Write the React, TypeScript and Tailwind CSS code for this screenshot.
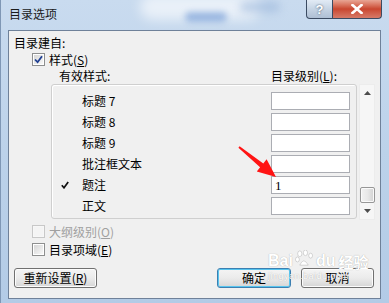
import { clsx } from "clsx";

const rows = [
  { name: "标题 7", level: "" },
  { name: "标题 8", level: "" },
  { name: "标题 9", level: "" },
  { name: "批注框文本", level: "" },
  { name: "题注", level: "1", used: true },
  { name: "正文", level: "" },
];

function CheckBox({ checked, disabled }: { checked?: boolean; disabled?: boolean }) {
  return (
    <span
      className={clsx(
        "grid h-[13px] w-[13px] shrink-0 place-items-center border p-[1px]",
        disabled ? "border-[#c8c8c8] bg-[#f7f7f7]" : "border-[#8e8f8f] bg-white"
      )}
    >
      <span
        className={clsx(
          "relative block h-full w-full",
          disabled ? "bg-[#f4f4f4]" : "bg-gradient-to-br from-[#d6d6d6] to-[#f8f8f8]"
        )}
      >
        {checked && (
          <svg viewBox="0 0 9 9" className="absolute inset-0 h-[9px] w-[9px]">
            <path d="M1 4.5 L3.6 7.2 L8 1.2" fill="none" stroke="#1f3f92" strokeWidth="1.8" />
          </svg>
        )}
      </span>
    </span>
  );
}

function Key({ k }: { k: string }) {
  return (
    <span>
      (<span className="underline underline-offset-1">{k}</span>)
    </span>
  );
}

function Button({ children, primary, className }: { children: React.ReactNode; primary?: boolean; className?: string }) {
  return (
    <div
      className={clsx(
        "flex h-[20px] items-center justify-center rounded-[3px] border bg-gradient-to-b from-[#f4f4f4] via-[#ebebeb] to-[#d6d6d6] text-[12px] leading-none text-black",
        primary ? "border-[#3c7fb1] shadow-[inset_0_0_0_1px_#57c4ee]" : "border-[#707070] shadow-[inset_0_0_0_1px_#fcfcfc]",
        className
      )}
    >
      {children}
    </div>
  );
}

function Arrow({ up }: { up?: boolean }) {
  return (
    <svg viewBox="0 0 7 4" className="h-[4px] w-[7px]">
      <path d={up ? "M0 4 L3.5 0 L7 4 Z" : "M0 0 L3.5 4 L7 0 Z"} fill="#4d4d4d" />
    </svg>
  );
}

export default function App() {
  return (
    <div className="relative h-[303px] w-[389px] overflow-hidden bg-gradient-to-b from-[#c9dbef] via-[#bcd2ea] to-[#b3cbe6] font-['Noto_Sans_CJK_SC','Noto_Sans',sans-serif] text-[12px] text-black">
      {/* blurred glass behind title */}
      <div className="absolute left-[140px] top-[-6px] h-[26px] w-[120px] rounded-full bg-white/60 blur-[6px]" />
      <div className="absolute left-[185px] top-[12px] h-[10px] w-[42px] rounded-full bg-[#7da3d8]/70 blur-[3px]" />
      <div className="absolute left-[240px] top-[2px] h-[10px] w-[40px] rounded-full bg-[#9ab5da]/60 blur-[4px]" />

      <div className="relative flex h-full flex-col border-l border-l-[#7f97b5] px-[7px]">
        {/* title bar */}
        <div className="flex h-[30px] items-start justify-between">
          <div className="mt-[6px] pl-[1px] text-[12px] leading-[16px] text-[#1b1b1b]">目录选项</div>
          <div className="flex">
            <div className="grid h-[19px] w-[27px] place-items-center rounded-bl-[4px] border border-t-0 border-[#3b4b62] bg-gradient-to-b from-[#e2ebf5] via-[#c6d4e4] to-[#aebfd4] font-['Liberation_Sans',sans-serif] text-[13px] font-bold leading-none text-white [text-shadow:0_0_2px_#34495e]">
              ?
            </div>
            <div className="grid h-[19px] w-[49px] place-items-center rounded-br-[4px] border border-l-0 border-t-0 border-[#3b4b62] bg-gradient-to-b from-[#e8a594] via-[#c9462f] to-[#d67a68]">
              <svg viewBox="0 0 12 10" className="h-[10px] w-[12px]">
                <path d="M1.5 1 L10.5 9 M10.5 1 L1.5 9" stroke="#fff" strokeWidth="2.6" strokeLinecap="square" />
              </svg>
            </div>
          </div>
        </div>

        {/* client area */}
        <div className="flex h-[269px] w-[373px] flex-col border border-[#6f8199] bg-[#f0f0f0] pb-[10px]">
          <div className="ml-[5px] mt-[4px] h-[16px] leading-[16px]">目录建自:</div>

          <div className="ml-[23px] mt-[2px] flex h-[13px] items-center gap-[4px] leading-[13px]">
            <CheckBox checked />
            <span>
              样式<Key k="S" />
            </span>
          </div>

          <div className="mt-[2px] flex h-[16px] leading-[16px]">
            <span className="ml-[50px] w-[212px]">有效样式:</span>
            <span>
              目录级别<Key k="L" />:
            </span>
          </div>

          <div className="ml-[42px] flex h-[136px]">
            <div className="h-[135px] w-[306px] overflow-hidden rounded-[3px] border border-[#cfcfcf] pt-[7px] shadow-[inset_1px_1px_0_#ffffff]">
              <div className="flex flex-col gap-[3px]">
                {rows.map((r) => (
                  <div key={r.name} className="flex h-[18px] items-center">
                    <span className="flex w-[30px] pl-[9px]">
                      {r.used && (
                        <svg viewBox="0 0 8 8" className="h-[8px] w-[8px]">
                          <path d="M0.8 4.2 L3 6.8 L7.2 1" fill="none" stroke="#111" strokeWidth="1.7" />
                        </svg>
                      )}
                    </span>
                    <span className="w-[189px] leading-[16px]">{r.name}</span>
                    <span className="flex h-[18px] w-[79px] items-center border border-[#abadb3] bg-white pl-[3px] font-['Liberation_Serif',serif] text-[13px] leading-none">
                      {r.level}
                    </span>
                  </div>
                ))}
              </div>
            </div>
            <div className="ml-[2px] flex h-[136px] w-[16px] flex-col items-center border border-[#ececec] bg-[#f6f6f6]">
              <div className="grid h-[16px] place-items-center">
                <Arrow up />
              </div>
              <div className="flex-1" />
              <div className="h-[16px] w-[15px] rounded-[2px] border border-[#979797] bg-gradient-to-r from-[#f2f2f2] via-[#e8e8e8] to-[#d2d2d2] shadow-[inset_0_0_0_1px_#fafafa]" />
              <div className="grid h-[16px] place-items-center">
                <Arrow />
              </div>
            </div>
          </div>

          <div className="ml-[23px] mt-[5px] flex h-[13px] items-center gap-[4px] leading-[13px] text-[#a0a0a0]">
            <CheckBox disabled />
            <span>
              大纲级别<Key k="O" />
            </span>
          </div>

          <div className="ml-[23px] mt-[5px] flex h-[13px] items-center gap-[4px] leading-[13px]">
            <CheckBox />
            <span>
              目录项域<Key k="E" />
            </span>
          </div>

          <div className="mt-[12px] flex items-center">
            <Button className="ml-[5px] w-[83px]">
              重新设置<Key k="R" />
            </Button>
            <Button primary className="ml-[120px] w-[74px]">
              确定
            </Button>
            <Button className="ml-[10px] w-[73px]">取消</Button>
          </div>
        </div>
      </div>

      {/* baidu watermark */}
      <div className="pointer-events-none absolute left-[268px] top-[250px] flex flex-col items-start text-white [text-shadow:0_0_1px_rgba(0,0,0,0.35)]">
        <div className="flex items-end gap-[2px] leading-none">
          <span className="font-['Liberation_Sans',sans-serif] text-[16px] font-bold">Bai</span>
          <svg viewBox="0 0 20 18" className="mb-[2px] h-[17px] w-[19px]">
            <g fill="#fff" stroke="rgba(0,0,0,0.25)" strokeWidth="0.6">
              <ellipse cx="5" cy="4" rx="2.2" ry="3" />
              <ellipse cx="11" cy="3" rx="2.2" ry="3" />
              <ellipse cx="16.5" cy="6" rx="2" ry="2.6" />
              <ellipse cx="2.5" cy="10" rx="2" ry="2.6" />
              <path d="M5 16 Q9 7 14 16 Z" />
            </g>
          </svg>
          <span className="font-['Liberation_Sans',sans-serif] text-[16px] font-bold">du</span>
          <span className="ml-[1px] text-[15px] font-bold">经验</span>
        </div>
        <div className="mt-[3px] font-['Liberation_Sans',sans-serif] text-[9px] leading-none tracking-[0.5px]">jingyan.baidu.com</div>
      </div>

      {/* red annotation arrow */}
      <svg className="pointer-events-none absolute left-0 top-0 h-[303px] w-[389px]" viewBox="0 0 389 303">
        <polygon
          points="239.6,146.2 263.3,163.4 266.6,159.3 276,177 256.8,171.4 260.1,167.3 238.4,147.8"
          fill="#ff1414"
        />
      </svg>
    </div>
  );
}
